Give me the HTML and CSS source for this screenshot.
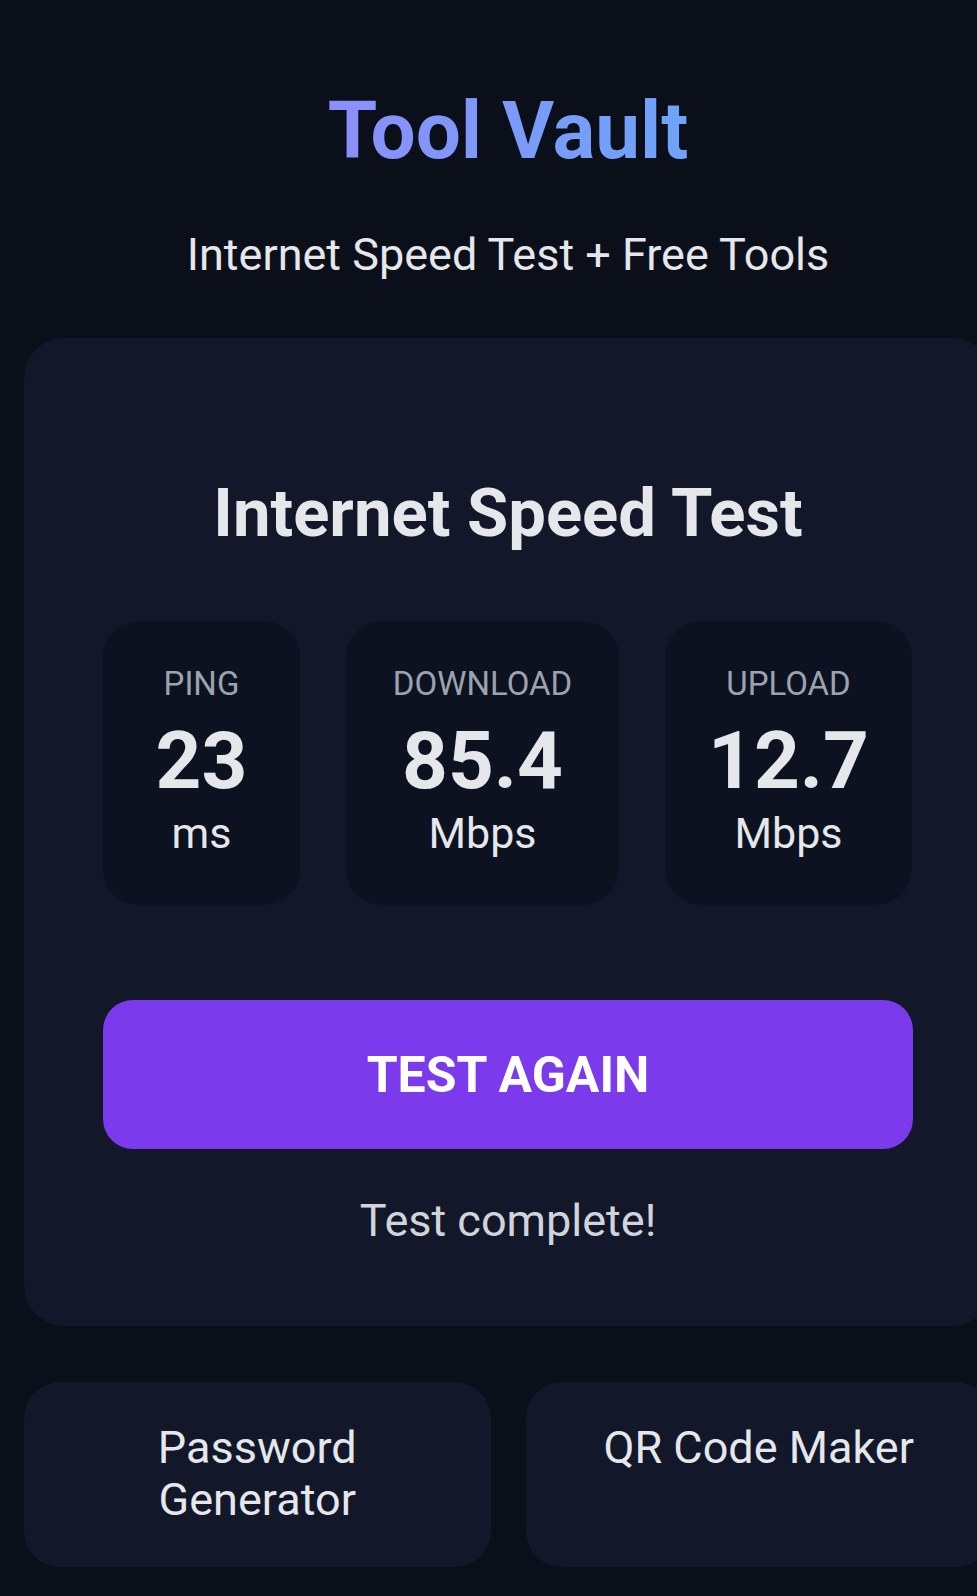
FILE: index.html
```html
<!DOCTYPE html>
<html lang="en">
<head>
    <meta charset="UTF-8">
    <meta name="viewport" content="width=device-width, initial-scale=1.0">
    <title>Tool Vault</title>
    <link rel="stylesheet" href="styles.css">
</head>
<body>
    <div class="page">
        <header class="header">
            <h1 class="logo">Tool Vault</h1>
            <p class="tagline">Internet Speed Test + Free Tools</p>
        </header>

        <section class="card speed-card">
            <h2>Internet Speed Test</h2>
            <div class="stats">
                <div class="stat">
                    <span class="stat-label">PING</span>
                    <span class="stat-value" id="ping">23</span>
                    <span class="stat-unit">ms</span>
                </div>
                <div class="stat">
                    <span class="stat-label">DOWNLOAD</span>
                    <span class="stat-value" id="download">85.4</span>
                    <span class="stat-unit">Mbps</span>
                </div>
                <div class="stat">
                    <span class="stat-label">UPLOAD</span>
                    <span class="stat-value" id="upload">12.7</span>
                    <span class="stat-unit">Mbps</span>
                </div>
            </div>
            <button class="test-btn">TEST AGAIN</button>
            <p class="status" id="status">Test complete!</p>
        </section>

        <div class="tools">
            <a class="tool" href="#">Password Generator</a>
            <a class="tool" href="#">QR Code Maker</a>
        </div>
    </div>
</body>
</html>
```

FILE: styles.css
```css
html, body {
    overflow-x: hidden;
}
body {
    margin: 0;
    font-family: Roboto, "Liberation Sans", sans-serif;
    background-color: #0b0f19;
    color: #e5e7eb;
}
.page {
    width: 968px;
    margin-left: 24px;
}
.header {
    text-align: center;
}
.logo {
    margin: 83px 0 0;
    font-size: 80px;
    line-height: 96px;
    font-weight: 700;
    display: inline-block;
    background: linear-gradient(90deg, #8b8ff9, #6ea4f9);
    -webkit-background-clip: text;
    background-clip: text;
    color: transparent;
}
.tagline {
    margin: 46px 0 0;
    font-size: 45px;
    line-height: 60px;
    color: #e5e7eb;
}
.card {
    background: #121829;
    border-radius: 40px;
}
.speed-card {
    margin-top: 53px;
    padding: 135px 79px 72px;
    text-align: center;
}
.speed-card h2 {
    margin: 0;
    font-size: 67px;
    line-height: 80px;
    font-weight: 700;
    color: #e5e7eb;
}
.stats {
    display: grid;
    grid-template-columns: 197px 273px 247px;
    gap: 46px;
    margin-top: 68px;
}
.stat {
    display: flex;
    flex-direction: column;
    align-items: center;
    background: #0c1220;
    border-radius: 36px;
    padding: 44px 0 47px;
}
.stat-label {
    font-size: 33px;
    line-height: 38px;
    color: #9ca3af;
}
.stat-value {
    margin-top: 10px;
    font-size: 80px;
    line-height: 96px;
    font-weight: 700;
    color: #e5e7eb;
}
.stat-unit {
    font-size: 43px;
    line-height: 49px;
    color: #e5e7eb;
}
.test-btn {
    display: block;
    width: 100%;
    height: 149px;
    margin-top: 95px;
    border: none;
    border-radius: 30px;
    background: #7c3aed;
    color: #fff;
    font-family: inherit;
    font-size: 50px;
    font-weight: 700;
    cursor: pointer;
}
.status {
    margin: 39px 0 0;
    font-size: 45px;
    line-height: 66px;
    color: #d1d5db;
}
.tools {
    display: grid;
    grid-template-columns: 1fr 1fr;
    gap: 35px;
    margin-top: 56px;
}
.tool {
    background: #121829;
    border-radius: 36px;
    padding: 40px;
    font-size: 45px;
    line-height: 52px;
    text-align: center;
    color: #e5e7eb;
    text-decoration: none;
    min-height: 105px;
}
```
